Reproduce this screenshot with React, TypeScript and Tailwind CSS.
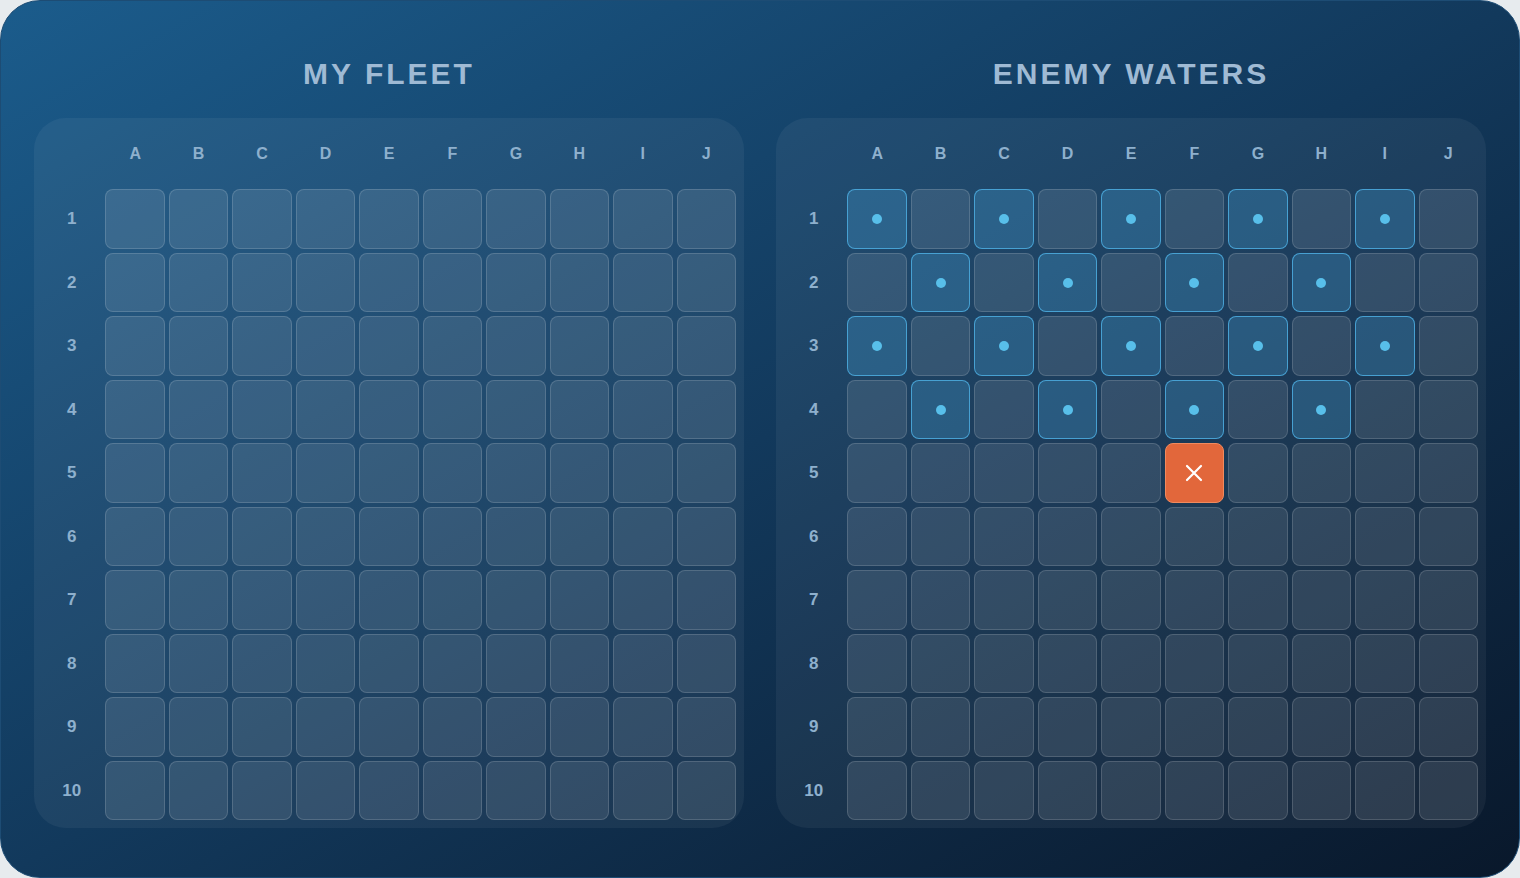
import React from "react";

const COLS = ["A", "B", "C", "D", "E", "F", "G", "H", "I", "J"];
const ROWS = Array.from({ length: 10 }, (_, i) => i + 1);

type CellState = "empty" | "miss" | "hit";

// shots fired so far, keyed like "F5"
const enemyShots: Record<string, CellState> = {
    F5: "hit",
};
[1, 3].forEach((r) => ["A", "C", "E", "G", "I"].forEach((c) => (enemyShots[`${c}${r}`] = "miss")));
[2, 4].forEach((r) => ["B", "D", "F", "H"].forEach((c) => (enemyShots[`${c}${r}`] = "miss")));

const Cell: React.FC<{ state: CellState }> = ({ state }) => {
    if (state === "hit") {
        return (
            <div className="flex items-center justify-center rounded-lg border border-[#f08a5e] bg-[#e2673b]">
                <svg width="18" height="18" viewBox="0 0 18 18" fill="none" stroke="white" strokeWidth="2.2" strokeLinecap="round">
                    <path d="M2 2l14 14M16 2L2 16" />
                </svg>
            </div>
        );
    }
    if (state === "miss") {
        return (
            <div className="flex items-center justify-center rounded-lg border border-[#4aa8dc]/90 bg-[#4fb3ea]/25">
                <span className="h-[10px] w-[10px] rounded-full bg-[#58bfea]" />
            </div>
        );
    }
    return <div className="rounded-lg border border-white/15 bg-white/10" />;
};

const Board: React.FC<{ title: string; shots?: Record<string, CellState> }> = ({ title, shots = {} }) => (
    <div className="flex flex-col">
        <h2 className="mb-[26px] text-center text-[30px] leading-9 font-bold tracking-[3px] text-[#9fbad4]">{title}</h2>
        <div className="rounded-[32px] bg-white/5 p-2">
            <div className="grid aspect-square grid-cols-11 grid-rows-11 gap-1">
                <div />
                {COLS.map((c) => (
                    <div key={c} className="flex items-center justify-center pb-1 text-[16px] font-bold text-[#8eb0cd]">
                        {c}
                    </div>
                ))}
                {ROWS.map((r) => (
                    <React.Fragment key={r}>
                        <div className="flex items-center justify-center text-[17px] font-bold text-[#8eb0cd]">{r}</div>
                        {COLS.map((c) => (
                            <Cell key={c} state={shots[`${c}${r}`] ?? "empty"} />
                        ))}
                    </React.Fragment>
                ))}
            </div>
        </div>
    </div>
);

export default function App() {
    return (
        <div className="h-[878px] w-[1520px] bg-[#e7ebee]" style={{ fontFamily: '"Liberation Sans", Arial, sans-serif' }}>
            <div className="grid h-full grid-cols-2 gap-8 rounded-[40px] border border-[#1d4c74] bg-linear-to-br from-[#1b5c8c] via-[#12395c] to-[#09182b] px-[33px] pt-[55px]">
                <Board title="MY FLEET" />
                <Board title="ENEMY WATERS" shots={enemyShots} />
            </div>
        </div>
    );
}
